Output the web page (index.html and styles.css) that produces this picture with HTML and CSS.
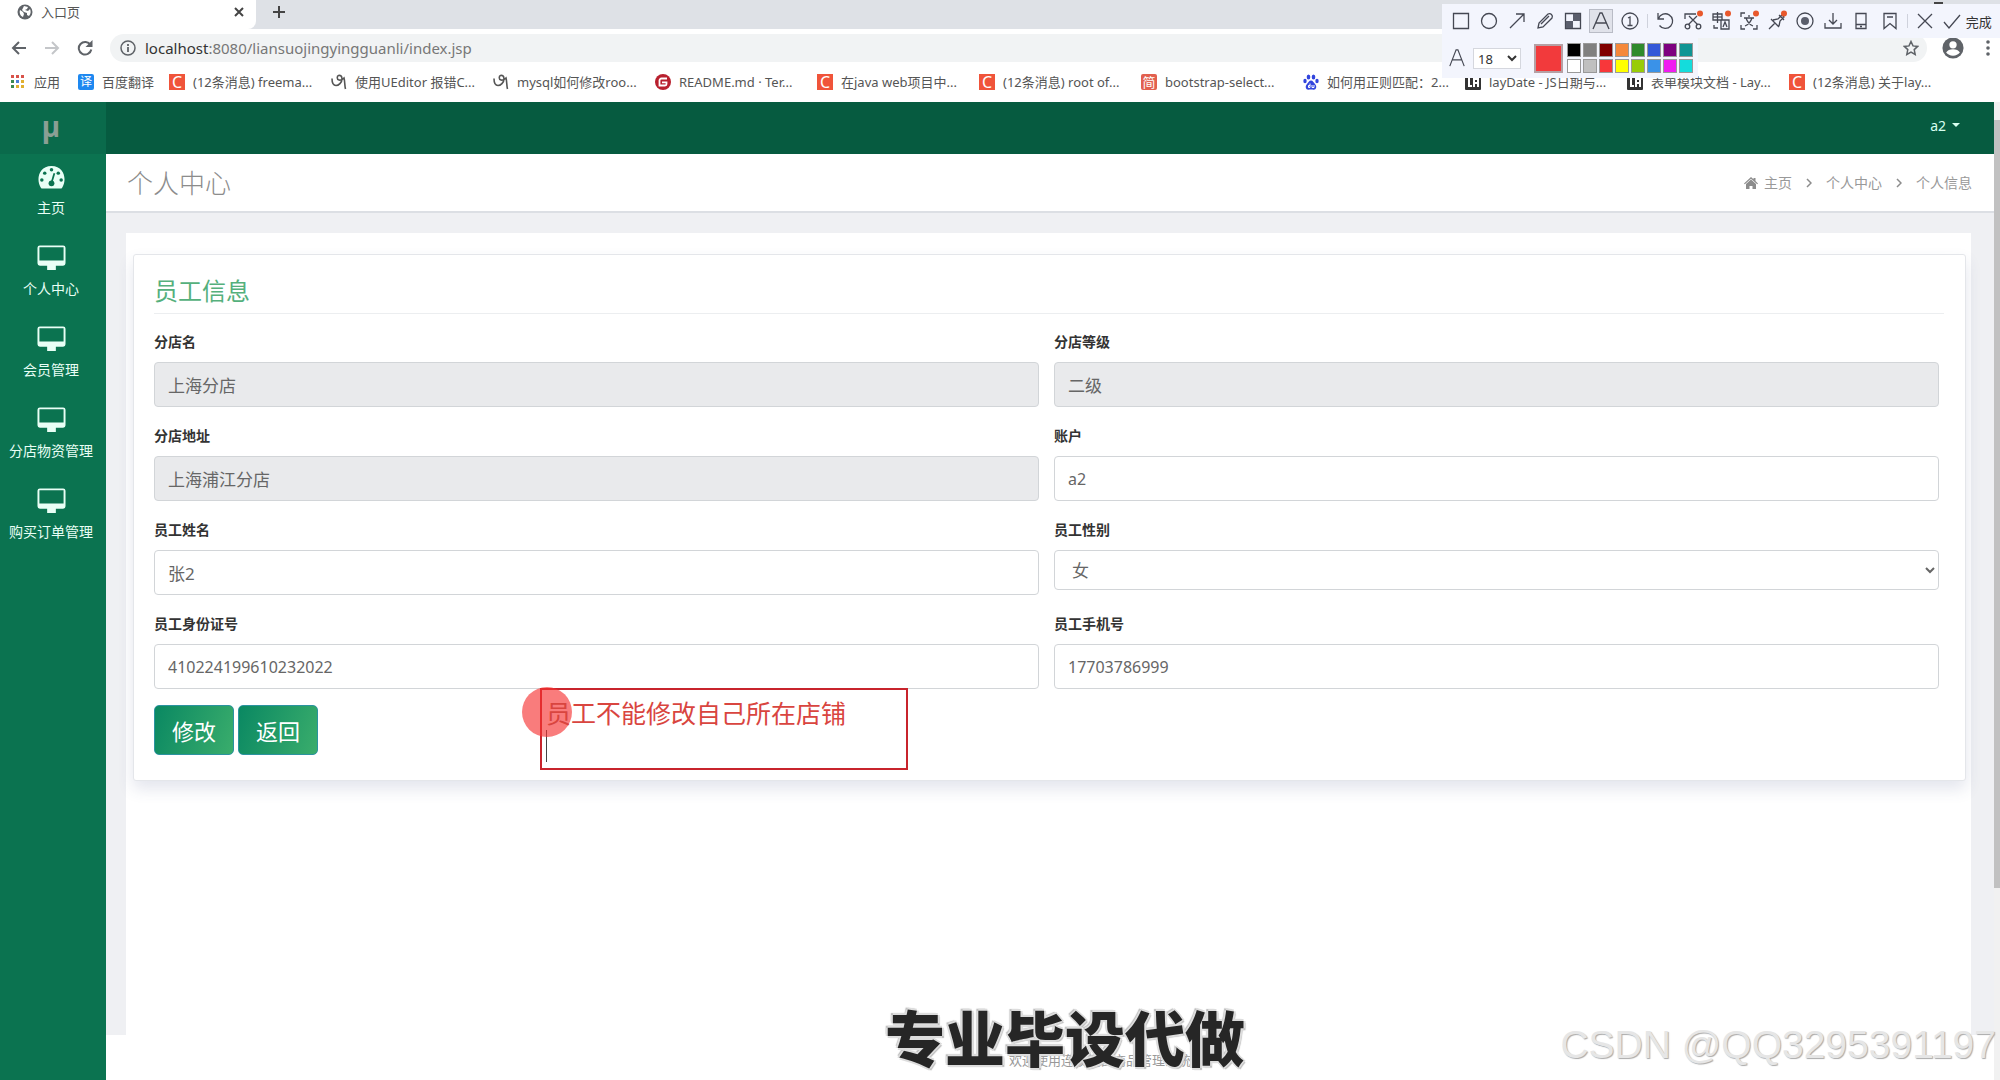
FILE: index.html
```html
<!DOCTYPE html>
<html lang="zh-CN">
<head>
<meta charset="utf-8">
<title>入口页</title>
<link rel="stylesheet" href="styles.css">
</head>
<body>
<svg class="sprite" aria-hidden="true">
  <symbol id="monitor" viewBox="0 0 30 26"><path fill="currentColor" fill-rule="evenodd" d="M3 0h24a2.500 2.500 0 0 1 2.500 2.500v16a2.500 2.500 0 0 1-2.500 2.500h-7.500v4.500h-9V21H3a2.500 2.500 0 0 1-2.500-2.500v-16A2.500 2.500 0 0 1 3 0zm-.5 2v13.500h25V2z"/></symbol>
  <symbol id="swirl" viewBox="0 0 16 16"><path fill="none" stroke="#555" stroke-width="1.600" d="M1 4.500c0 4 1.500 7 4 7s6-3 6-6.500S9 1 7.500 1.500s-2 4 .5 4.500 4-1 5-2c1 4 .5 7 1.500 11"/></symbol>
  <symbol id="lay" viewBox="0 0 16 16"><rect width="16" height="16" rx="1" fill="#333"/><path fill="none" stroke="#fff" stroke-width="2" d="M4 3v9h3M9 13V5h4v8M9 9h4"/></symbol>
</svg>

<header class="browser">
  <div class="tab-strip">
    <div class="tab">
      <svg class="ic16" viewBox="0 0 16 16"><circle cx="8" cy="8" r="7.500" fill="#5f6368"/><path fill="#fff" d="M3 6l3 2 1 2-1 3C3.500 12 2 9 3 6zM7 2l4 1-1 2-2 1 3 1 2-2c1 2 1 5-1 7l-2-1V9L7 8 5 6z"/></svg>
      <span class="tab-title">入口页</span>
      <button class="plain" aria-label="关闭"><svg width="10" height="10" viewBox="0 0 10 10"><path stroke="#444" stroke-width="2" d="M1 1l8 8M9 1L1 9"/></svg></button>
    </div>
    <button class="plain new-tab" aria-label="新标签页"><svg width="14" height="14" viewBox="0 0 14 14"><path stroke="#444" stroke-width="2" d="M7 1v12M1 7h12"/></svg></button>
  </div>
  <div class="nav-bar">
    <button class="plain" aria-label="后退"><svg class="ic16" viewBox="0 0 16 16"><path fill="none" stroke="#5f6368" stroke-width="2" d="M15 8H2M8 2L2 8l6 6"/></svg></button>
    <button class="plain" aria-label="前进"><svg class="ic16" viewBox="0 0 16 16"><path fill="none" stroke="#c4c6c9" stroke-width="2" d="M1 8h13M8 2l6 6-6 6"/></svg></button>
    <button class="plain" aria-label="刷新"><svg class="ic16" viewBox="0 0 16 16"><path fill="none" stroke="#5f6368" stroke-width="2" d="M13.500 5A6.300 6.300 0 1 0 14.300 9.500"/><path fill="#5f6368" d="M15.500 0v7h-7z"/></svg></button>
    <div class="address">
      <svg class="ic16" viewBox="0 0 16 16"><circle cx="8" cy="8" r="7" fill="none" stroke="#5f6368" stroke-width="1.500"/><path stroke="#5f6368" stroke-width="1.800" d="M8 7v5M8 4v2"/></svg>
      <span class="url"><span class="host">localhost</span>:8080/liansuojingyingguanli/index.jsp</span>
      <svg class="ic16" viewBox="0 0 16 16"><path fill="none" stroke="#5f6368" stroke-width="1.500" d="M8 1.500l2 4.400 4.700.5-3.500 3.200 1 4.800L8 12l-4.200 2.400 1-4.800L1.300 6.400l4.700-.5z"/></svg>
    </div>
    <svg class="avatar" viewBox="0 0 24 24"><circle cx="12" cy="12" r="11.500" fill="#5f6368"/><circle cx="12" cy="8.500" r="4" fill="#fff"/><path fill="#fff" d="M4.500 17c2-5 13-5 15 0-3 4.500-12 4.500-15 0z"/></svg>
    <svg class="dots" viewBox="0 0 4 16"><g fill="#5f6368"><circle cx="2" cy="2" r="1.800"/><circle cx="2" cy="8" r="1.800"/><circle cx="2" cy="14" r="1.800"/></g></svg>
  </div>
  <nav class="bookmarks">
    <a class="apps" href="#"><svg class="ic16" viewBox="0 0 16 16"><path fill="#d9534a" d="M1 1h3v3H1zM6 1h3v3H6zM11 1h3v3h-3z"/><path fill="#3c8a50" d="M1 6h3v3H1z"/><path fill="#4a80d8" d="M6 6h3v3H6z"/><path fill="#e0b030" d="M11 6h3v3h-3zM6 11h3v3H6zM11 11h3v3h-3z"/><path fill="#3c8a50" d="M1 11h3v3H1z"/></svg>应用</a>
    <a class="fanyi" href="#"><span class="fav blue">译</span>百度翻译</a>
    <a class="mark" href="#"><span class="fav csdn">C</span>(12条消息) freema...</a>
    <a class="mark" href="#"><svg class="ic16"><use href="#swirl"/></svg>使用UEditor 报错C...</a>
    <a class="mark" href="#"><svg class="ic16"><use href="#swirl"/></svg>mysql如何修改roo...</a>
    <a class="mark" href="#"><svg class="ic16" viewBox="0 0 16 16"><circle cx="8" cy="8" r="8" fill="#b8202e"/><path fill="none" stroke="#fff" stroke-width="1.800" d="M12 4.500H6.500a2 2 0 0 0-2 2v5H10a1.500 1.500 0 0 0 1.500-1.500V8.300H7"/></svg>README.md · Ter...</a>
    <a class="mark" href="#"><span class="fav csdn">C</span>在java web项目中...</a>
    <a class="mark" href="#"><span class="fav csdn">C</span>(12条消息) root of...</a>
    <a class="mark" href="#"><span class="fav jian">简</span>bootstrap-select...</a>
    <a class="mark" href="#"><svg class="ic16" viewBox="0 0 16 16"><g fill="#3245dd"><ellipse cx="5.500" cy="3" rx="1.800" ry="2.500"/><ellipse cx="10.500" cy="3" rx="1.800" ry="2.500"/><ellipse cx="2" cy="7" rx="1.700" ry="2.200"/><ellipse cx="14" cy="7" rx="1.700" ry="2.200"/><path d="M8 6.500c2 0 2.500 2 4 3.500 2.500 2.500 1 6-1.500 5.700-1.700-.3-3.300-.3-5 0C3 16 1.500 12.500 4 10c1.500-1.500 2-3.500 4-3.500z"/></g><path fill="none" stroke="#fff" d="M7 9.500v4H5.500v-2H7M9 11v2.500h2V11"/></svg>如何用正则匹配：2...</a>
    <a class="mark" href="#"><svg class="ic16"><use href="#lay"/></svg>layDate - JS日期与...</a>
    <a class="mark" href="#"><svg class="ic16"><use href="#lay"/></svg>表单模块文档 - Lay...</a>
    <a class="mark" href="#"><span class="fav csdn">C</span>(12条消息) 关于lay...</a>
  </nav>
</header>

<div class="app">
  <aside class="sidebar">
    <a class="logo" href="#">µ</a>
    <nav class="menu">
      <a class="menu-item" href="#"><svg class="menu-icon" viewBox="0 0 30 26"><path fill="currentColor" d="M4 24C-1 17 1 1.500 15 1.500S31 17 26 24a2 2 0 0 1-2 1H6a2 2 0 0 1-2-1z"/><g fill="#0b7350"><circle cx="15" cy="5.500" r="1.800"/><circle cx="8" cy="9" r="1.800"/><circle cx="22" cy="9" r="1.800"/><circle cx="5" cy="16" r="1.800"/><circle cx="25" cy="16" r="1.800"/><circle cx="15" cy="19.500" r="3"/></g><path stroke="#0b7350" stroke-width="1.800" d="M15 19l3-10"/></svg>主页</a>
      <a class="menu-item" href="#"><svg class="menu-icon"><use href="#monitor"/></svg>个人中心</a>
      <a class="menu-item" href="#"><svg class="menu-icon"><use href="#monitor"/></svg>会员管理</a>
      <a class="menu-item" href="#"><svg class="menu-icon"><use href="#monitor"/></svg>分店物资管理</a>
      <a class="menu-item" href="#"><svg class="menu-icon"><use href="#monitor"/></svg>购买订单管理</a>
    </nav>
  </aside>

  <main class="main">
    <div class="topbar"><button class="plain user">a2<span class="caret"></span></button></div>
    <div class="title-bar">
      <h1 class="page-title">个人中心</h1>
      <nav class="crumbs">
        <a class="home" href="#"><svg width="14" height="12" viewBox="0 0 14 12"><path fill="#8c8c8c" d="M7 0l2.500 2.300V1h2v3L14 6.500l-.8.800L7 1.700.8 7.300 0 6.500zM7 2.500l5 4.500V12H8.500V9h-3v3H2V7z"/></svg>主页</a>
        <svg class="sep" viewBox="0 0 6 10"><path fill="none" stroke="#8c8c8c" stroke-width="1.500" d="M1 1l4 4-4 4"/></svg>
        <a href="#">个人中心</a>
        <svg class="sep" viewBox="0 0 6 10"><path fill="none" stroke="#8c8c8c" stroke-width="1.500" d="M1 1l4 4-4 4"/></svg>
        <span>个人信息</span>
      </nav>
    </div>
    <div class="content">
      <section class="panel">
        <form class="card">
          <h2 class="card-title">员工信息</h2>
          <div class="fields">
            <div class="field"><label for="shop">分店名</label><input id="shop" type="text" value="上海分店" readonly></div>
            <div class="field"><label for="level">分店等级</label><input id="level" type="text" value="二级" readonly></div>
            <div class="field"><label for="addr">分店地址</label><input id="addr" type="text" value="上海浦江分店" readonly></div>
            <div class="field"><label for="account">账户</label><input id="account" class="latin" type="text" value="a2"></div>
            <div class="field"><label for="name">员工姓名</label><input id="name" type="text" value="张2"></div>
            <div class="field"><label for="sex">员工性别</label><select id="sex"><option>女</option><option>男</option></select></div>
            <div class="field"><label for="idcard">员工身份证号</label><input id="idcard" class="latin" type="text" value="410224199610232022"></div>
            <div class="field"><label for="phone">员工手机号</label><input id="phone" class="latin" type="text" value="17703786999"></div>
          </div>
          <div class="actions">
            <button class="btn" type="button">修改</button>
            <button class="btn" type="button">返回</button>
          </div>
          <div class="note"><span class="cursor-dot"></span><p class="note-text">员工不能修改自己所在店铺</p><span class="note-caret"></span></div>
        </form>
      </section>
    </div>
    <footer class="footer">欢迎使用连锁经营商品管理系统</footer>
  </main>
  <div class="scrollbar"><div class="thumb"></div></div>
</div>

<div class="shot-tools">
  <span class="window-min"></span>
  <div class="tools">
    <button class="plain tool" aria-label="矩形"><svg viewBox="0 0 20 20"><path d="M2.500 2.500h15v15h-15z"/></svg></button>
    <button class="plain tool" aria-label="椭圆"><svg viewBox="0 0 20 20"><circle cx="10" cy="10" r="7.500"/></svg></button>
    <button class="plain tool" aria-label="箭头"><svg viewBox="0 0 20 20"><path d="M3 17L17 3M9 3h8v8"/></svg></button>
    <button class="plain tool" aria-label="画笔"><svg viewBox="0 0 20 20"><path d="M3 17l1-5 9-9q2-1 3.500.5T17 7l-9 9zM6 13l8-8"/></svg></button>
    <button class="plain tool" aria-label="马赛克"><svg viewBox="0 0 20 20"><path d="M2.500 2.500h15v15h-15z"/><path class="solid" d="M10 3h7v7h-7zM3 10h7v7H3z"/></svg></button>
    <button class="plain tool active" aria-label="文字"><svg viewBox="0 0 20 20"><path d="M2 18L9 2h2l7 16M5 12h10"/></svg></button>
    <button class="plain tool" aria-label="序号"><svg viewBox="0 0 20 20"><circle cx="10" cy="10" r="8"/><path d="M8 7l2-1v8M7.500 14.500h5"/></svg></button>
    <span class="rule"></span>
    <button class="plain tool" aria-label="撤销"><svg viewBox="0 0 20 20"><path d="M3 2v6h6M3.500 7.500a7.300 7.300 0 1 1 1 7"/></svg></button>
    <button class="plain tool" aria-label="截图"><svg viewBox="0 0 20 20"><path d="M2 8V3h11M6 5l9 9M14 5l-9 9"/><circle cx="4.500" cy="15.500" r="2.300"/><circle cx="15.500" cy="15.500" r="2.300"/><circle class="dot" cx="17" cy="2.500" r="3"/></svg></button>
    <button class="plain tool" aria-label="翻译"><svg viewBox="0 0 20 20"><path d="M2 3h9v6H2zM6.500 1v11M10 9h8v9h-8zM12 16l2-5 2 5M3 14v3h4"/><path d="M2 6h9"/><circle class="dot" cx="17" cy="2.500" r="3"/></svg></button>
    <button class="plain tool" aria-label="识别文字"><svg viewBox="0 0 20 20"><path d="M2 6V2h4M2 14v4h4M18 14v4h-4M10 4v2M5 7h10M7 7q2 6 7 8M13 7q-2 6-7 8"/><circle class="dot" cx="17" cy="2.500" r="3"/></svg></button>
    <button class="plain tool" aria-label="钉住"><svg viewBox="0 0 20 20"><path d="M2 18l6-6M4 8l8 8M6 9l5-1 4-4 2 2-4 4-1 5M12 4l5 5"/><circle class="dot" cx="17" cy="2.500" r="3"/></svg></button>
    <button class="plain tool" aria-label="录制"><svg viewBox="0 0 20 20"><circle cx="10" cy="10" r="8"/><circle class="solid" cx="10" cy="10" r="4"/></svg></button>
    <button class="plain tool" aria-label="保存"><svg viewBox="0 0 20 20"><path d="M2 12v5h16v-5M10 2v11M6 9l4 4 4-4"/></svg></button>
    <button class="plain tool" aria-label="手机"><svg viewBox="0 0 20 20"><path d="M5 2.500h10v15H5zM5 13.500h10M9 15.500h2"/></svg></button>
    <button class="plain tool" aria-label="收藏"><svg viewBox="0 0 20 20"><path d="M4 2.500h12v15l-6-5-6 5zM7 6h6"/></svg></button>
    <span class="rule"></span>
    <button class="plain tool" aria-label="取消"><svg viewBox="0 0 20 20"><path d="M3 3l14 14M17 3L3 17"/></svg></button>
    <button class="plain done"><svg viewBox="0 0 20 20"><path d="M2 11l5 6L18 4"/></svg>完成</button>
  </div>
  <div class="options">
    <svg class="letter" viewBox="0 0 20 20"><path d="M2 19L9 1h2l7 18M5 12h10"/></svg>
    <select class="size" aria-label="字号"><option>18</option></select>
    <span class="current"></span>
    <div class="swatches">
      <i class="sw c1"></i><i class="sw c2"></i><i class="sw c3"></i><i class="sw c4"></i><i class="sw c5"></i><i class="sw c6"></i><i class="sw c7"></i><i class="sw c8"></i>
      <i class="sw c9"></i><i class="sw c10"></i><i class="sw c11"></i><i class="sw c12"></i><i class="sw c13"></i><i class="sw c14"></i><i class="sw c15"></i><i class="sw c16"></i>
    </div>
  </div>
</div>

<div class="caption">专业毕设代做</div>
<div class="watermark">CSDN @QQ3295391197</div>
</body>
</html>
```
FILE: styles.css
```css
* { box-sizing: border-box; }
body {
  margin: 0;
  min-height: 100vh;
  display: flex;
  flex-direction: column;
  position: relative;
  overflow: hidden;
  background: #fff;
  color: #333;
  font: 14px/20px "Noto Sans", "Noto Sans CJK SC", sans-serif;
}
a { color: inherit; text-decoration: none; }
button, input, select { font-family: inherit; }
.sprite { position: absolute; width: 0; height: 0; }
.plain { border: 0; padding: 0; background: none; color: inherit; display: flex; align-items: center; justify-content: center; }
.ic16 { width: 16px; height: 16px; flex: none; }

/* Browser chrome */
.tab-strip { display: flex; height: 29px; background: #dee1e6; }
.tab { display: flex; align-items: center; gap: 8px; width: 256px; padding: 0 12px 6px 17px; background: #fff; border-radius: 0 0 8px 0; font-size: 13px; color: #555; }
.tab-title { flex: 1; }
.new-tab { padding: 0 16px 6px; }
.nav-bar { display: flex; align-items: center; height: 38px; padding: 0 10px 0 11px; }
.nav-bar > .plain { width: 16px; margin-right: 17px; }
.address { flex: 1; display: flex; align-items: center; gap: 9px; height: 28px; padding: 0 8px 0 10px; border-radius: 14px; background: #f1f3f4; }
.url { flex: 1; font-size: 15px; color: #777; }
.host { color: #333; }
.avatar { width: 22px; height: 22px; margin: 0 22px 0 15px; }
.dots { width: 4px; height: 16px; }
.bookmarks { display: flex; height: 35px; padding: 0 0 5px 10px; font-size: 13px; color: #555; white-space: nowrap; }
.bookmarks a { display: flex; align-items: center; gap: 8px; flex: none; }
.apps { width: 68px; }
.fanyi { width: 91px; }
.mark { width: 162px; }
.fav { width: 16px; height: 16px; flex: none; color: #fff; text-align: center; line-height: 16px; font-size: 13px; }
.blue { background: #1e88f0; border-radius: 2px; font-size: 12px; }
.csdn { background: #f0543a; font-size: 16px; }
.jian { background: #e2604f; border-radius: 2px; }

/* Application shell */
.app { flex: 1; display: grid; grid-template-columns: 106px 1fr 6px; }
.sidebar { background: #0b7350; color: #e9fff6; }
.logo { display: flex; align-items: center; justify-content: center; height: 52px; padding: 0 4px 4px 0; background: #0a6a4b; color: #8a9f94; font: bold 28px/48px "Noto Sans", sans-serif; }
.menu-item { display: flex; flex-direction: column; align-items: center; gap: 8px; height: 81px; padding: 10px 4px 0 0; font-size: 14px; line-height: 20px; }
.menu-icon { width: 29px; height: 26px; }
.main { display: flex; flex-direction: column; min-width: 0; background: #eff0f3; }
.topbar { display: flex; justify-content: flex-end; height: 52px; padding: 0 34px 6px 0; background: #065b40; color: #d8fff0; }
.user { gap: 6px; font-size: 14px; }
.caret { border: 4px solid transparent; border-top-color: currentColor; border-bottom: 0; }
.title-bar { display: flex; justify-content: space-between; align-items: center; height: 59px; padding: 0 22px 0 21px; background: #fff; border-bottom: 2px solid #dcdfe4; }
.page-title { margin: 0; font-size: 26px; line-height: 36px; font-weight: 300; color: #8c8c8c; }
.crumbs { display: flex; align-items: center; gap: 14px; font-size: 14px; color: #999; }
.home { display: flex; align-items: center; gap: 6px; }
.sep { width: 6px; height: 10px; }
.content { flex: 1; display: flex; padding: 20px 23px 0 20px; }
.panel { flex: 1; padding: 21px 5px 0 7px; background: #fff; }
.card { position: relative; padding: 19px 21px 25px 20px; border: 1px solid #e4e6ea; border-radius: 3px; background: #fff; box-shadow: 0 8px 16px rgba(60, 70, 130, .14); }
.card-title { margin: 0 0 17px; padding-bottom: 5px; border-bottom: 1px solid #eceef0; font-size: 24px; line-height: 34px; font-weight: 400; color: #55b07c; }
.fields { display: grid; grid-template-columns: 1fr 1fr; gap: 18px 15px; padding-right: 5px; }
.field { display: flex; flex-direction: column; }
.field label { margin-bottom: 10px; font-weight: 700; font-size: 14px; line-height: 21px; color: #333; }
.field input, .field select { width: 100%; border: 1px solid #d2d5d8; border-radius: 4px; background: #fff; color: #666; font-size: 17px; }
.field input { height: 45px; padding: 0 13px; }
.field input:read-only { background: #e9eaec; }
.field .latin { font-size: 16px; }
.field select { height: 40px; padding: 0 0 0 13px; }
.actions { display: flex; gap: 4px; margin-top: 16px; }
.btn { width: 80px; height: 50px; padding: 0; border: 1px solid #2b93a0; border-radius: 5px; background: linear-gradient(110deg, #0a8862, #3aad6c); color: #fff; font-size: 22px; }
.footer { height: 45px; padding: 15px 0 0 100px; background: #fff; text-align: center; font-size: 13px; line-height: 20px; color: #999; }
.scrollbar { background: #f1f1f1; padding-top: 18px; }
.thumb { height: 80%; background: #c1c1c1; }

/* Annotation drawn over the form */
.note { position: absolute; left: 406px; bottom: 10px; width: 368px; height: 82px; padding: 6px 0 0 4px; border: 2px solid #c8242c; }
.note-text { position: relative; margin: 0; font-size: 25px; line-height: 34px; color: #d9453f; white-space: nowrap; }
.note-caret { display: block; width: 1px; height: 32px; background: #444; }
.cursor-dot { position: absolute; left: -20px; top: -3px; width: 50px; height: 50px; border-radius: 50%; background: rgba(245, 50, 50, .64); }

/* Screen capture toolbar */
.shot-tools { position: absolute; top: 0; right: 0; width: 558px; }
.window-min { position: absolute; right: 57px; top: 2px; width: 9px; height: 2px; background: #444; }
.tools { display: flex; align-items: center; justify-content: space-between; height: 34px; margin-top: 4px; padding: 0 8px 0 8px; background: #f3f5fd; color: #333; }
.tool { width: 22px; height: 22px; }
.tool svg, .done svg { width: 20px; height: 20px; }
.tools svg, .letter { fill: none; stroke: #454853; stroke-width: 1.300; overflow: visible; }
.tools .solid { fill: #5a5e6c; stroke: none; }
.tools .dot { fill: #e8582c; stroke: none; }
.active { background: #e0e2ea; outline: 1px solid #b9bcc6; }
.rule { width: 1px; height: 14px; background: #cfd2dc; }
.done { gap: 4px; font-size: 13px; }
.options { display: flex; align-items: center; width: 256px; height: 40px; padding: 0 0 0 6px; background: #f3f5fd; }
.letter { width: 18px; height: 18px; margin-right: 7px; }
.size { width: 48px; height: 21px; padding: 0; border: 1px solid #d5d7de; background: #fff; color: #333; font-size: 13px; }
.current { width: 29px; height: 29px; margin: 0 4px 0 13px; border: 2px solid #b5a0a4; background: #f23a3c; }
.swatches { display: grid; grid-template-columns: repeat(8, 14px); gap: 2px; }
.sw { height: 14px; border: 1px solid #999; }
.c1 { background: #000; } .c2 { background: #808080; } .c3 { background: #800000; } .c4 { background: #f5883a; }
.c5 { background: #2f8a2c; } .c6 { background: #3558d8; } .c7 { background: #7d0080; } .c8 { background: #109494; }
.c9 { background: #fff; } .c10 { background: #c0c0c0; } .c11 { background: #f8373a; } .c12 { background: #ff0; }
.c13 { background: #98cc08; } .c14 { background: #3a92e8; } .c15 { background: #f01cf0; } .c16 { background: #14dcdc; }

/* Overlaid captions */
.caption {
  position: absolute; left: 0; right: 0; bottom: 0; padding-left: 130px;
  text-align: center; font: 900 60px/88px "Noto Sans CJK SC", sans-serif; color: #262626;
  text-shadow: 2px 0 #ddd, -2px 0 #ddd, 0 2px #ddd, 0 -2px #ddd, 2px 2px 1px #bbb, -2px -2px 1px #bbb;
}
.watermark {
  position: absolute; right: 4px; bottom: 11px;
  font: 39px/48px "Liberation Sans", Arial, sans-serif; color: #e6e6e6;
  text-shadow: 1px 1px 1px #aaa;
}
```
